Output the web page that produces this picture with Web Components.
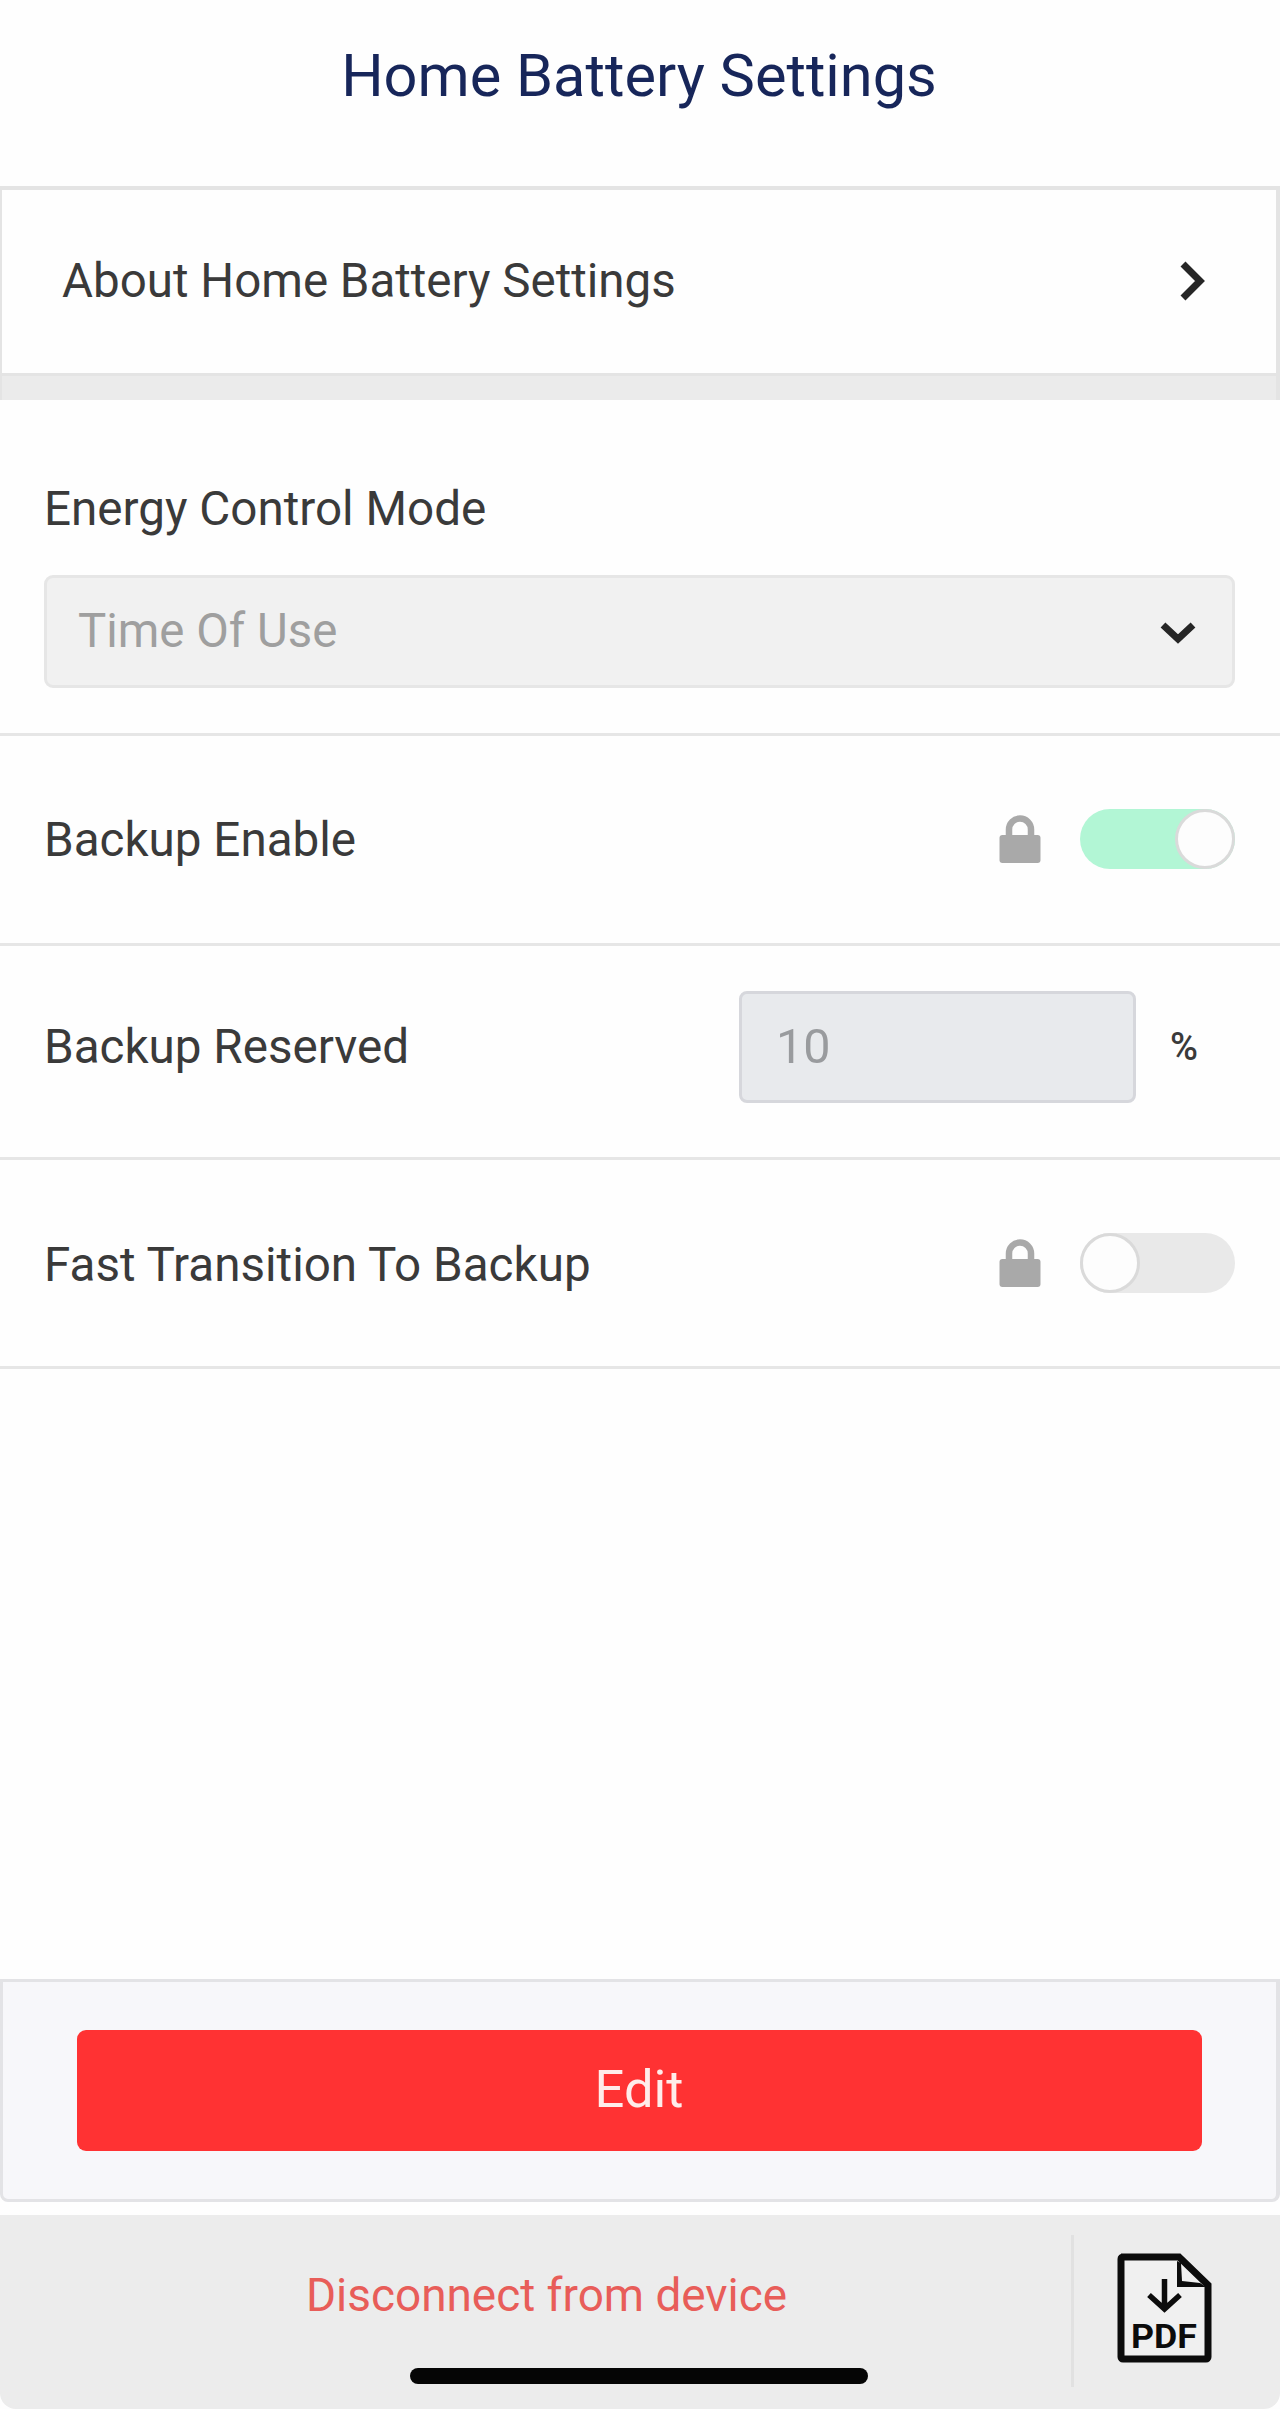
<!DOCTYPE html>
<html lang="en">
<head>
<meta charset="utf-8">
<title>Home Battery Settings</title>
<style>
    body {
        margin: 0;
        background-color: #fefefe;
        color: #3a3a3a;
        font-family: Roboto, "Liberation Sans", sans-serif;
    }
</style>
</head>
<body>
<battery-settings></battery-settings>
<script>
class PageTitle extends HTMLElement {
    constructor() {
        super();
        this.attachShadow({ mode: 'open' }).innerHTML = `
            <style>
                :host {
                    display: flex;
                    justify-content: center;
                    box-sizing: border-box;
                    height: 186px;
                    padding-right: 2px;
                    color: #17265a;
                }
                h1 {
                    margin: 41px 0 0;
                    font-size: 59.5px;
                    line-height: 70px;
                    font-weight: 400;
                }
            </style>
            <h1><slot></slot></h1>
        `;
    }
}
customElements.define('page-title', PageTitle);

class ChevronIcon extends HTMLElement {
    constructor() {
        super();
        const icon = this.getAttribute('to') === 'down'
            ? '<svg width="38" height="24" viewBox="0 0 38 24"><path d="M4 4 L19 18 L34 4"/></svg>'
            : '<svg width="28" height="42" viewBox="0 0 28 42"><path d="M5 4 L22 21 L5 38"/></svg>';
        this.attachShadow({ mode: 'open' }).innerHTML = `
            <style>
                :host { display: block; }
                svg { display: block; }
                path { fill: none; stroke: #262626; stroke-width: 7; }
            </style>
            ${icon}
        `;
    }
}
customElements.define('chevron-icon', ChevronIcon);

class AboutLink extends HTMLElement {
    constructor() {
        super();
        this.attachShadow({ mode: 'open' }).innerHTML = `
            <style>
                :host {
                    display: block;
                    box-sizing: border-box;
                    height: 214px;
                    border: solid #e4e4e4;
                    border-width: 4px 4px 0 2px;
                }
                .row {
                    display: flex;
                    align-items: center;
                    justify-content: space-between;
                    box-sizing: border-box;
                    height: 183px;
                    padding: 0 70px 1px 60px;
                    font-size: 47.5px;
                }
                .band {
                    height: 24px;
                    border-top: 3px solid #e4e4e4;
                    background-color: #ebebeb;
                }
            </style>
            <div class="row"><slot></slot><chevron-icon to="right"></chevron-icon></div>
            <div class="band"></div>
        `;
    }
}
customElements.define('about-link', AboutLink);

class SelectBox extends HTMLElement {
    constructor() {
        super();
        this.attachShadow({ mode: 'open' }).innerHTML = `
            <style>
                :host {
                    display: flex;
                    align-items: center;
                    justify-content: space-between;
                    box-sizing: border-box;
                    height: 113px;
                    padding: 0 35px 2px 31px;
                    border: 3px solid #e6e6e6;
                    border-radius: 9px;
                    background-color: #f1f1f1;
                    color: #9f9f9f;
                    font-size: 47.4px;
                }
                chevron-icon {
                    margin-top: 5px;
                }
            </style>
            <slot></slot><chevron-icon to="down"></chevron-icon>
        `;
    }
}
customElements.define('select-box', SelectBox);

class LockIcon extends HTMLElement {
    constructor() {
        super();
        this.attachShadow({ mode: 'open' }).innerHTML = `
            <style>
                :host { display: block; }
                svg { display: block; }
            </style>
            <svg width="42" height="48" viewBox="0 0 42 48">
                <path d="M10 23 V14.5 a11 11 0 0 1 22 0 V23" fill="none" stroke="#a9a9a9" stroke-width="6.5"/>
                <rect x="0.5" y="20" width="41" height="28" rx="3" fill="#a9a9a9"/>
            </svg>
        `;
    }
}
customElements.define('lock-icon', LockIcon);

class ToggleSwitch extends HTMLElement {
    constructor() {
        super();
        this.attachShadow({ mode: 'open' }).innerHTML = `
            <style>
                :host {
                    display: flex;
                    width: 155px;
                    height: 60px;
                    border-radius: 30px;
                    background-color: #e9e9e9;
                }
                :host([on]) {
                    justify-content: flex-end;
                    background-color: #b2f6d5;
                }
                .knob {
                    box-sizing: border-box;
                    width: 60px;
                    height: 60px;
                    border: 3px solid #dadada;
                    border-radius: 50%;
                    background-color: #fdfdfd;
                }
            </style>
            <div class="knob"></div>
        `;
    }
}
customElements.define('toggle-switch', ToggleSwitch);

class NumberField extends HTMLElement {
    constructor() {
        super();
        this.attachShadow({ mode: 'open' }).innerHTML = `
            <style>
                :host {
                    display: flex;
                    align-items: center;
                }
                .box {
                    display: flex;
                    align-items: center;
                    box-sizing: border-box;
                    width: 397px;
                    height: 112px;
                    padding-left: 34px;
                    border: 3px solid #d6d7dc;
                    border-radius: 8px;
                    background-color: #e8eaed;
                    color: #999b9e;
                    font-size: 48.5px;
                }
                .unit {
                    width: 64px;
                    margin-left: 34px;
                    font-size: 38px;
                    font-weight: 500;
                }
            </style>
            <div class="box"><slot></slot></div>
            <div class="unit">${this.getAttribute('unit')}</div>
        `;
    }
}
customElements.define('number-field', NumberField);

class SettingRow extends HTMLElement {
    constructor() {
        super();
        this.attachShadow({ mode: 'open' }).innerHTML = `
            <style>
                :host {
                    display: flex;
                    align-items: center;
                    justify-content: space-between;
                    box-sizing: border-box;
                    padding: 0 45px 0 44px;
                    border-bottom: 3px solid #e6e6e6;
                    font-size: 47.6px;
                }
                :host([stacked]) {
                    display: block;
                }
                .label {
                    padding-top: var(--label-shift, 2px);
                    line-height: 54px;
                }
                :host([stacked]) .label {
                    padding-top: 82px;
                    margin-bottom: 39px;
                }
                .controls {
                    display: flex;
                    align-items: center;
                    gap: 39px;
                }
                :host([stacked]) .controls {
                    display: block;
                }
            </style>
            <div class="label">${this.getAttribute('label')}</div>
            <div class="controls"><slot></slot></div>
        `;
    }
}
customElements.define('setting-row', SettingRow);

class EditPanel extends HTMLElement {
    constructor() {
        super();
        this.attachShadow({ mode: 'open' }).innerHTML = `
            <style>
                :host {
                    display: block;
                    box-sizing: border-box;
                    height: 223px;
                    padding: 48px 74px 0 74px;
                    border: 3px solid #e3e3e6;
                    border-right-width: 4px;
                    border-radius: 0 0 8px 8px;
                    background-color: #f7f7fa;
                }
                button {
                    display: block;
                    width: 100%;
                    height: 121px;
                    padding: 0 1px 3px 0;
                    border: none;
                    border-radius: 9px;
                    background-color: #ff3233;
                    color: #ffecea;
                    font: inherit;
                    font-size: 52.5px;
                }
            </style>
            <button><slot></slot></button>
        `;
    }
}
customElements.define('edit-panel', EditPanel);

class PdfIcon extends HTMLElement {
    constructor() {
        super();
        this.attachShadow({ mode: 'open' }).innerHTML = `
            <style>
                :host { display: block; }
                svg { display: block; }
                text { font: 700 34px Roboto, "Liberation Sans", sans-serif; }
            </style>
            <svg width="97" height="110" viewBox="0 0 97 110">
                <path d="M5 4 H63 L92 32 V104 a2 2 0 0 1 -2 2 H7 a2 2 0 0 1 -2 -2 V6 a2 2 0 0 1 2 -2 Z" fill="#f0f0f0" stroke="#0c0c0c" stroke-width="7"/>
                <path d="M61 8 V34 H90 L84 30 L66 28 L65 10 Z" fill="#0c0c0c"/>
                <path d="M48.500 26 V56 M33 42 L48.500 56 L64 42" fill="none" stroke="#0c0c0c" stroke-width="5.500"/>
                <text x="15" y="95" textLength="66" lengthAdjust="spacingAndGlyphs" fill="#0c0c0c">PDF</text>
            </svg>
        `;
    }
}
customElements.define('pdf-icon', PdfIcon);

class BottomBar extends HTMLElement {
    constructor() {
        super();
        this.attachShadow({ mode: 'open' }).innerHTML = `
            <style>
                :host {
                    display: grid;
                    grid-template-columns: 1071px 1fr;
                    position: relative;
                    height: 194px;
                    border-radius: 0 0 16px 16px;
                    background-color: #ececec;
                }
                .link {
                    padding: 53px 0 0 306px;
                    color: #e85d59;
                    font-size: 45.9px;
                    line-height: 54px;
                }
                .pdf {
                    height: 152px;
                    margin-top: 20px;
                    border-left: 3px solid #e1e1e1;
                }
                pdf-icon {
                    margin: 18px 0 0 42px;
                }
                /* home indicator floats above the bar */
                .home {
                    position: absolute;
                    left: 410px;
                    bottom: 25px;
                    width: 458px;
                    height: 16px;
                    border-radius: 8px;
                    background-color: #050505;
                }
            </style>
            <div class="link"><slot></slot></div>
            <div class="pdf"><pdf-icon></pdf-icon></div>
            <div class="home"></div>
        `;
    }
}
customElements.define('bottom-bar', BottomBar);

class BatterySettings extends HTMLElement {
    constructor() {
        super();
        this.attachShadow({ mode: 'open' }).innerHTML = `
            <style>
                :host {
                    display: flex;
                    flex-direction: column;
                    height: 2409px;
                }
                .mode { height: 336px; }
                .enable { height: 210px; padding-bottom: 1px; }
                .reserved { height: 214px; padding-right: 46px; padding-bottom: 10px; --label-shift: 0; }
                .fast { height: 209px; --label-shift: 4px; }
                edit-panel { margin-top: auto; }
                bottom-bar { margin-top: 13px; }
            </style>
            <page-title>Home Battery Settings</page-title>
            <about-link>About Home Battery Settings</about-link>
            <setting-row class="mode" label="Energy Control Mode" stacked>
                <select-box>Time Of Use</select-box>
            </setting-row>
            <setting-row class="enable" label="Backup Enable">
                <lock-icon></lock-icon>
                <toggle-switch on></toggle-switch>
            </setting-row>
            <setting-row class="reserved" label="Backup Reserved">
                <number-field unit="%">10</number-field>
            </setting-row>
            <setting-row class="fast" label="Fast Transition To Backup">
                <lock-icon></lock-icon>
                <toggle-switch></toggle-switch>
            </setting-row>
            <edit-panel>Edit</edit-panel>
            <bottom-bar>Disconnect from device</bottom-bar>
        `;
    }
}
customElements.define('battery-settings', BatterySettings);
</script>
</body>
</html>
